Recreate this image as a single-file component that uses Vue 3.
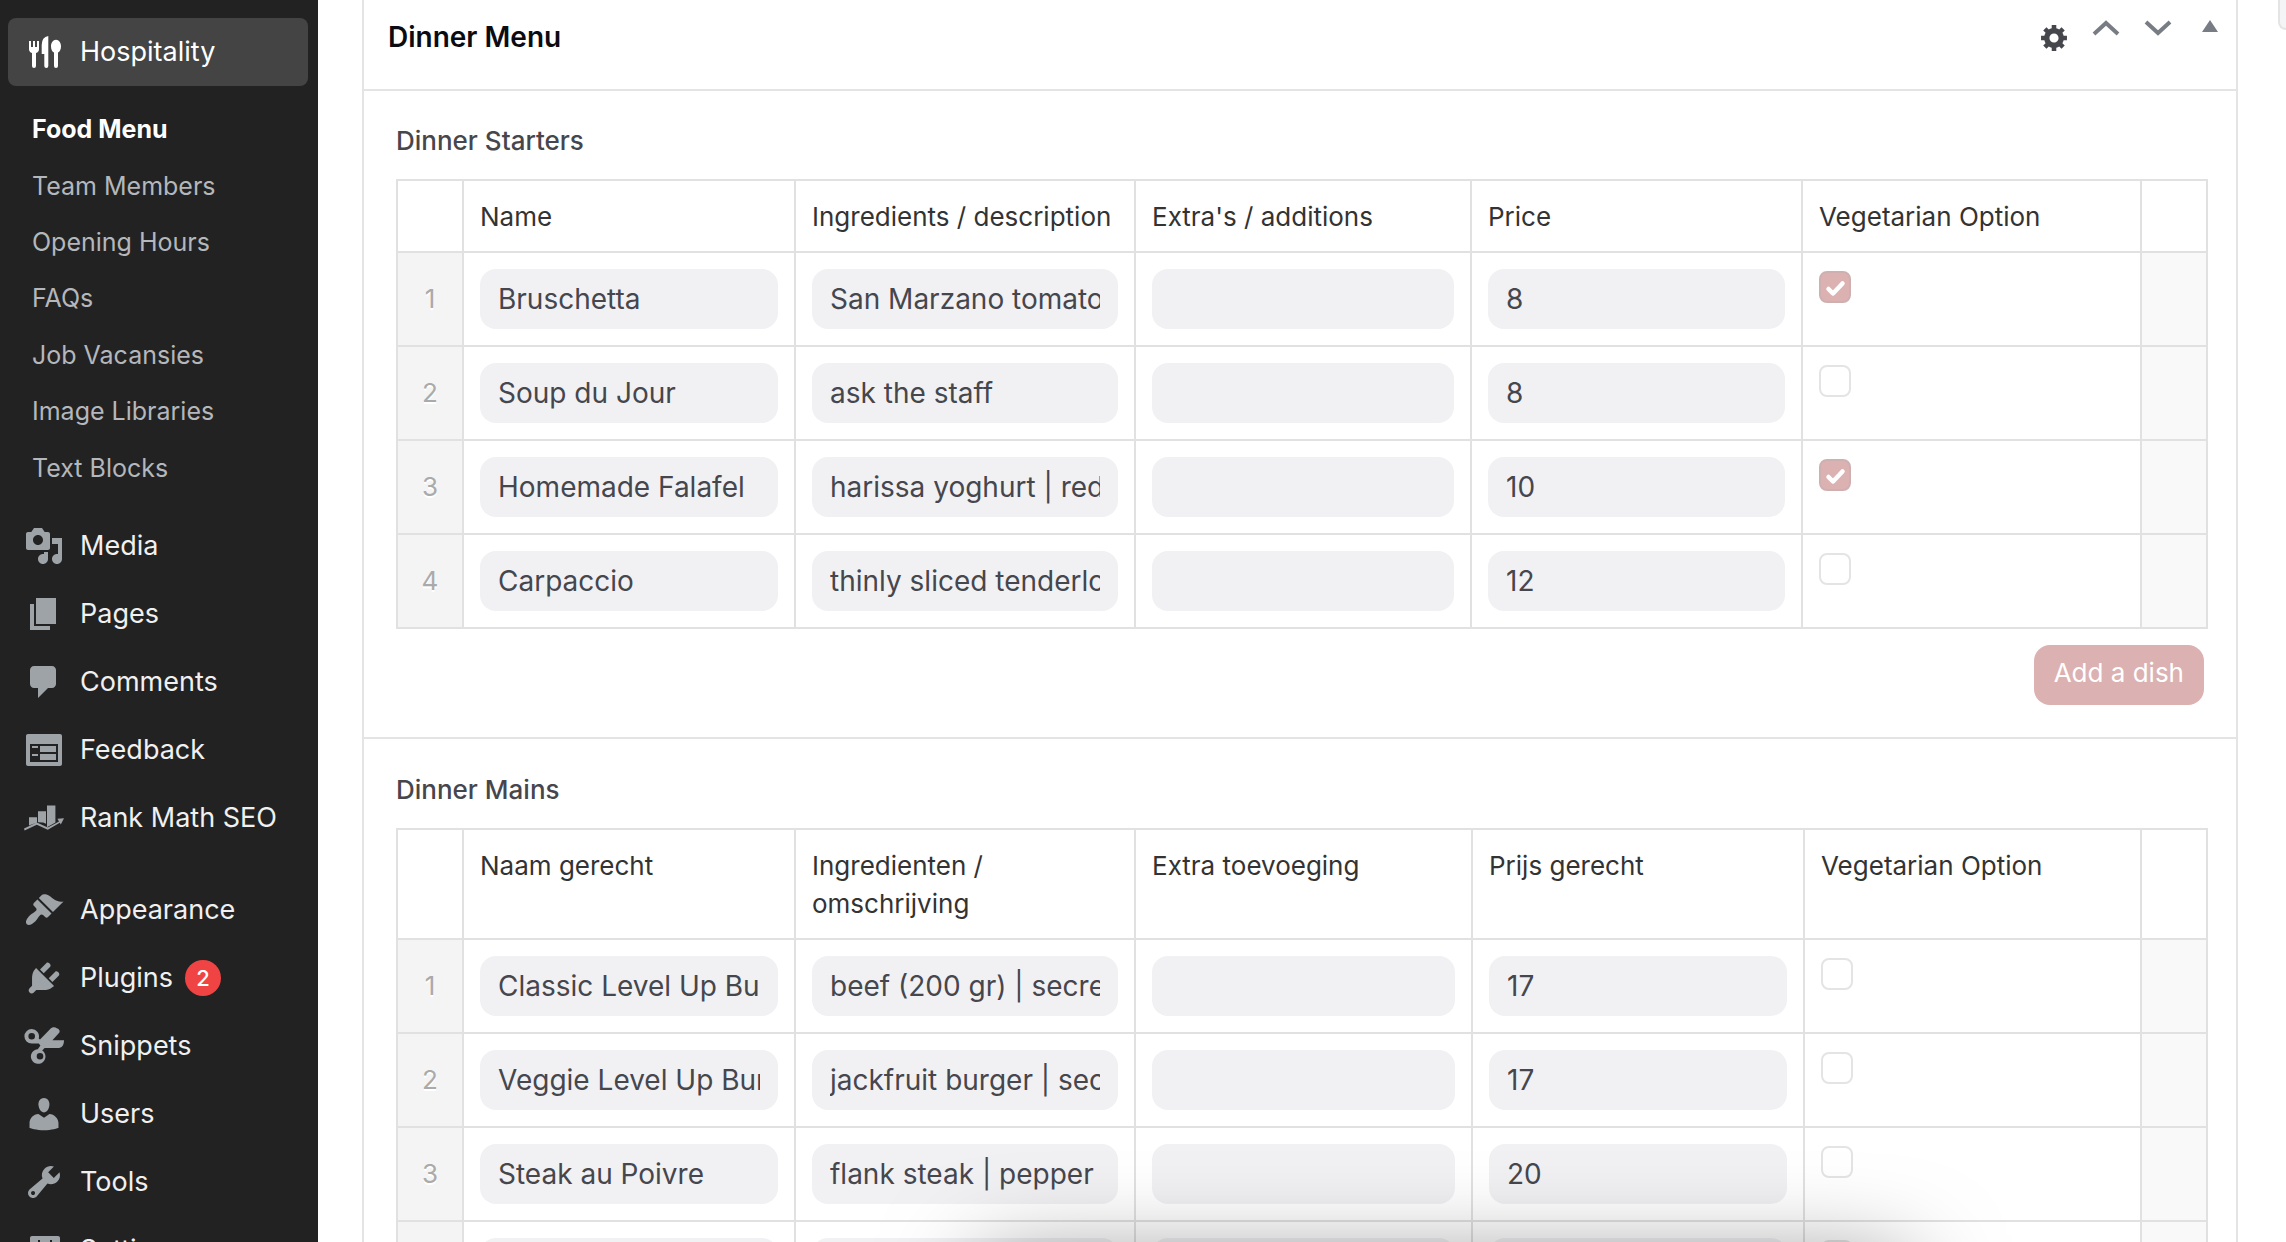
<script setup>
const submenu = ['Food Menu', 'Team Members', 'Opening Hours', 'FAQs', 'Job Vacansies', 'Image Libraries', 'Text Blocks']

const contentItems = [
  { label: 'Media', path: 'M13 11V4c0-.55-.45-1-1-1h-1.67L9 1H5L3.67 3H2c-.55 0-1 .45-1 1v7c0 .55.45 1 1 1h10c.55 0 1-.45 1-1zM7 4.5c1.38 0 2.5 1.12 2.5 2.5S8.38 9.5 7 9.5 4.5 8.38 4.5 7 5.62 4.5 7 4.5zM14 6h5v10.5c0 1.38-1.12 2.5-2.5 2.5S14 17.88 14 16.5s1.12-2.5 2.5-2.5c.17 0 .34.02.5.05V9h-3V6zm-4 8.05V13h2v3.5c0 1.38-1.12 2.5-2.5 2.5S7 17.88 7 16.5 8.12 14 9.5 14c.17 0 .34.02.5.05z' },
  { label: 'Pages', path: 'M6 15V2h10v13H6zm-1 1h8v2H3V5h2v11z' },
  { label: 'Comments', path: 'M5 2h9c1.1 0 2 .9 2 2v7c0 1.1-.9 2-2 2h-2l-5 5v-5H5c-1.1 0-2-.9-2-2V4c0-1.1.9-2 2-2z' },
  { label: 'Feedback', path: 'M2 2h16c.55 0 1 .45 1 1v14c0 .55-.45 1-1 1H2c-.55 0-1-.45-1-1V3c0-.55.45-1 1-1zm15 14V7H3v9h14zM4 8v1h3V8H4zm4 0v3h8V8H8zm-4 4v1h3v-1H4zm4 0v3h8v-3H8z' },
  { label: 'Rank Math SEO', path: 'M2.5 9.6h4v2.6l-4 1.5zM7 6.6h4v6.3l-1.4-.7L7 12.1zM11.5 3.7h4.2v8.6l-4.2 2.3zM0 15.3l6.4-3 5.5 2.5 5.6-3.1-.8-1.3L20 10.1l-1.6 3.1-.5-.8-6 3.5-5.5-2.500L.3 16.2z' },
]

const adminItems = [
  { label: 'Appearance', path: 'M14.48 11.06L7.41 3.99l1.5-1.5c.5-.56 2.3-.47 3.51.32 1.21.8 1.43 1.28 2.91 2.1 1.18.64 2.45 1.26 4.45.85zm-.71.71L6.7 4.7 4.93 6.47c-.39.39-.39 1.02 0 1.41l1.06 1.06c.39.39.39 1.03 0 1.42-.6.6-1.43 1.11-2.21 1.69-.35.26-.7.53-1.01.84C1.43 14.23.4 16.08 1.4 17.07c.99 1 2.84-.03 4.18-1.36.31-.31.58-.66.85-1.02.57-.78 1.08-1.61 1.69-2.21.39-.39 1.02-.39 1.41 0l1.06 1.06c.39.39 1.02.39 1.41 0z' },
  { label: 'Plugins', badge: 2, path: 'M13.11 4.36L9.87 7.6 8 5.73l3.24-3.24c.35-.34 1.05-.2 1.56.32.52.51.66 1.21.31 1.55zm-8 1.77l.91-1.12 9.01 9.01-1.19.84c-.71.71-2.63 1.16-3.82 1.16H6.14L4.9 17.26c-.59.59-1.54.59-2.12 0-.59-.58-.59-1.53 0-2.12l1.24-1.24v-3.88c0-1.13.4-3.19 1.09-3.89zm7.26 3.97l3.24-3.24c.34-.35 1.04-.21 1.55.31.52.51.66 1.21.31 1.55l-3.24 3.25z' },
  { label: 'Snippets', path: 'M3.85 1.5a3.65 3.65 0 0 1 3.5 4.7L8 6.8l5-5.200C14.2.3 15.6.6 16.4 1.1c1.4.5 1.7 1.5 1.2 2.3L14.2 7.1H20c0 2.5-1 3.9-3.2 3.9h-6.5L9.1 12.2a3.65 3.65 0 1 1-2.2-.6L8.2 9.7 7.4 8.8H3.85a3.65 3.65 0 0 1 0-7.3zm0 2a1.65 1.65 0 1 0 0 3.3 1.65 1.65 0 0 0 0-3.3zM8 13.5a1.65 1.65 0 1 0 0 3.3 1.65 1.65 0 0 0 0-3.3z' },
  { label: 'Users', path: 'M10 9.25c-2.27 0-2.73-3.44-2.73-3.44C7 4.02 7.82 2 9.97 2c2.16 0 2.98 2.02 2.71 3.81 0 0-.41 3.44-2.68 3.44zm0 2.57L12.72 10c2.39 0 4.52 2.33 4.52 4.53v2.49s-3.65 1.13-7.24 1.13c-3.65 0-7.24-1.13-7.24-1.13v-2.49c0-2.25 1.94-4.48 4.47-4.48z' },
  { label: 'Tools', path: 'M16.68 9.77c-1.34 1.34-3.3 1.67-4.95.99l-5.41 6.52c-.99.99-2.59.99-3.58 0s-.99-2.59 0-3.57l6.52-5.42c-.68-1.65-.35-3.61.99-4.95 1.28-1.28 3.12-1.62 4.72-1.06l-2.89 2.89 2.82 2.82 2.86-2.87c.53 1.58.18 3.39-1.08 4.65zM3.81 16.21c.4.39 1.04.39 1.43 0 .4-.4.4-1.04 0-1.43-.39-.4-1.03-.4-1.43 0-.39.39-.39 1.03 0 1.43z' },
  { label: 'Settings', path: 'M18 16V4c0-.55-.45-1-1-1H4c-.55 0-1 .45-1 1v12c0 .55.45 1 1 1h13c.55 0 1-.45 1-1zM8 5v7H7V5zm6 0v3h-1V5zm0 5v5h-1v-5z' },
]

const sections = [
  {
    id: 'starters',
    title: 'Dinner Starters',
    columns: ['Name', 'Ingredients / description', "Extra's / additions", 'Price', 'Vegetarian Option'],
    widths: [332, 340, 336, 331],
    action: 'Add a dish',
    rows: [
      { values: ['Bruschetta', 'San Marzano tomatoes | basil', '', '8'], veg: true },
      { values: ['Soup du Jour', 'ask the staff', '', '8'], veg: false },
      { values: ['Homemade Falafel', 'harissa yoghurt | red onion', '', '10'], veg: true },
      { values: ['Carpaccio', 'thinly sliced tenderloin', '', '12'], veg: false },
    ],
  },
  {
    id: 'mains',
    title: 'Dinner Mains',
    columns: ['Naam gerecht', 'Ingredienten / omschrijving', 'Extra toevoeging', 'Prijs gerecht', 'Vegetarian Option'],
    widths: [332, 340, 337, 332],
    rows: [
      { values: ['Classic Level Up Burger', 'beef (200 gr) | secret sauce', '', '17'], veg: false },
      { values: ['Veggie Level Up Burger', 'jackfruit burger | secret sauce', '', '17'], veg: false },
      { values: ['Steak au Poivre', 'flank steak | pepper', '', '20'], veg: false },
      { values: ['', '', '', ''], veg: false },
    ],
  },
]
</script>

<template>
  <div class="admin">
    <nav class="sidebar">
      <a href="#" class="item current">
        <svg class="icon" viewBox="0 0 40 40" aria-hidden="true">
          <path d="M5 9h2v6h2V9h2v6h2V9h2v8q0 3-3 4v13q0 2-2 2t-2-2V21q-3-1-3-4zM24.300 4v30q0 2-2 2t-2-2V22h-2.600V13q0-8 6.600-9z" />
          <path d="M32 7.700c3 0 5 3 5 6.500 0 3-1.200 5.500-3 6.400V34q0 2-2 2t-2-2V20.600c-1.800-.9-3-3.400-3-6.400 0-3.500 2-6.500 5-6.500z" />
        </svg>
        <span>Hospitality</span>
      </a>
      <div class="submenu">
        <a v-for="(label, i) in submenu" :key="label" href="#" class="subitem" :class="{ selected: i === 0 }">{{ label }}</a>
      </div>
      <div v-for="(group, g) in [contentItems, adminItems]" :key="g" class="group">
        <a v-for="item in group" :key="item.label" href="#" class="item">
          <svg class="icon" viewBox="0 0 20 20" aria-hidden="true"><path fill-rule="evenodd" :d="item.path" /></svg>
          <span>{{ item.label }}</span>
          <span v-if="item.badge" class="badge">{{ item.badge }}</span>
        </a>
      </div>
    </nav>

    <main class="content">
      <div class="panel">
        <header class="panel-head">
          <h2>Dinner Menu</h2>
          <div class="handles">
            <button type="button" class="gear" aria-label="Settings">
              <svg width="32" height="32" viewBox="0 0 19 21" aria-hidden="true">
                <path d="M18 12h-2.180c-.17.7-.44 1.350-.81 1.930l1.540 1.540-2.100 2.100-1.540-1.540c-.58.36-1.230.63-1.910.79V19H8v-2.180c-.68-.16-1.330-.43-1.910-.79l-1.540 1.540-2.120-2.120 1.540-1.540c-.36-.58-.63-1.230-.79-1.910H1V9.030h2.170c.16-.7.44-1.350.8-1.940L2.430 5.550l2.100-2.100 1.540 1.540c.58-.37 1.240-.64 1.930-.81V2h3v2.180c.68.16 1.330.43 1.910.79l1.540-1.540 2.120 2.120-1.540 1.540c.36.59.64 1.240.8 1.940H18V12zm-8.500 1.500c1.660 0 3-1.340 3-3s-1.340-3-3-3-3 1.340-3 3 1.340 3 3 3z" />
              </svg>
            </button>
            <button type="button" aria-label="Move up">
              <svg width="28" height="16" viewBox="0 0 28 16" aria-hidden="true"><path d="M2 14L14 3l12 11" class="stroke" /></svg>
            </button>
            <button type="button" aria-label="Move down">
              <svg width="28" height="16" viewBox="0 0 28 16" aria-hidden="true"><path d="M2 2l12 11L26 2" class="stroke" /></svg>
            </button>
            <button type="button" aria-label="Toggle panel">
              <svg width="16" height="16" viewBox="0 0 16 16" aria-hidden="true"><path d="M8 0l8 12H0z" /></svg>
            </button>
          </div>
        </header>

        <section v-for="section in sections" :key="section.id" class="field">
          <h3 :id="section.id">{{ section.title }}</h3>
          <table :aria-labelledby="section.id">
            <colgroup>
              <col class="col-edge" />
              <col v-for="(w, i) in section.widths" :key="i" :style="{ width: w + 'px' }" />
              <col />
              <col class="col-edge" />
            </colgroup>
            <thead>
              <tr>
                <th></th>
                <th v-for="column in section.columns" :key="column" scope="col">{{ column }}</th>
                <th></th>
              </tr>
            </thead>
            <tbody>
              <tr v-for="(row, r) in section.rows" :key="r">
                <td class="order">{{ r + 1 }}</td>
                <td v-for="(value, c) in row.values" :key="c">
                  <input v-model="row.values[c]" type="text" class="text" :aria-label="section.columns[c]" />
                </td>
                <td><input v-model="row.veg" type="checkbox" class="check" aria-label="Vegetarian Option" /></td>
                <td class="remove"></td>
              </tr>
            </tbody>
          </table>
          <div v-if="section.action" class="actions">
            <button type="button" class="add">{{ section.action }}</button>
          </div>
        </section>
      </div>
    </main>

    <aside class="side"><div class="side-box"></div></aside>
    <div class="dock-shadow"></div>
  </div>
</template>

<style>
body {
  background: #fff;
}
</style>

<style scoped>
* {
  box-sizing: border-box;
}
.admin {
  display: flex;
  height: 100vh;
  overflow: hidden;
  position: relative;
  font-family: Inter, "Liberation Sans", sans-serif;
  font-size: 26px;
  line-height: 38px;
}
a {
  text-decoration: none;
}
.sidebar {
  flex: 0 0 318px;
  padding-top: 18px;
  background: #222;
}
.item {
  display: flex;
  align-items: center;
  gap: 16px;
  height: 68px;
  margin: 0 10px 0 8px;
  padding-left: 16px;
  color: #f0f0f1;
  font-size: 27px;
  white-space: nowrap;
}
.item.current {
  border-radius: 8px;
  background: #444;
  color: #fff;
}
.icon {
  flex: none;
  width: 40px;
  height: 40px;
  fill: #9ea3a8;
}
.current .icon {
  fill: #fff;
}
.submenu {
  display: flex;
  flex-direction: column;
  height: 395px;
  margin-top: 15px;
}
.subitem {
  display: flex;
  flex: 1;
  align-items: center;
  padding-left: 32px;
  color: #b4b7bc;
  font-size: 25px;
}
.subitem.selected {
  color: #fff;
  font-weight: 700;
}
.group {
  margin-top: 16px;
}
.group + .group {
  margin-top: 24px;
}
.badge {
  width: 36px;
  height: 36px;
  margin-left: -4px;
  border-radius: 18px;
  background: #f04444;
  color: #fff;
  font-size: 22px;
  font-weight: 500;
  line-height: 36px;
  text-align: center;
}
.content {
  flex: 1;
  min-width: 0;
  padding: 0 40px 0 44px;
}
.panel {
  border: solid #e4e4e5;
  border-width: 0 2px;
}
.panel-head {
  display: flex;
  justify-content: space-between;
  align-items: flex-start;
  padding: 18px 0 33px 24px;
  border-bottom: 2px solid #e4e4e5;
}
h2,
h3 {
  margin: 0;
}
h2 {
  color: #0b0b12;
  font-size: 28px;
  font-weight: 600;
}
.handles {
  display: flex;
  height: 38px;
}
.handles button {
  display: flex;
  align-items: center;
  justify-content: center;
  width: 52px;
  height: 20px;
  padding: 0;
  border: 0;
  background: none;
  fill: #787c84;
}
.handles .gear {
  height: 40px;
  fill: #46464d;
}
.stroke {
  fill: none;
  stroke: #787c84;
  stroke-width: 4;
}
.field {
  padding: 31px 28px 32px 32px;
  border-bottom: 2px solid #e4e4e5;
}
.field + .field {
  padding-top: 32px;
}
h3 {
  margin-bottom: 19px;
  color: #46464d;
  font-size: 26px;
  font-weight: 500;
}
table {
  width: 100%;
  table-layout: fixed;
  border-collapse: separate;
  border-spacing: 0;
  border: solid #e1e1e1;
  border-width: 0 2px 2px 0;
}
.col-edge {
  width: 66px;
}
th,
td {
  padding: 16px;
  border: solid #e1e1e1;
  border-width: 2px 0 0 2px;
  vertical-align: top;
}
th {
  padding: 17px 16px 15px;
  color: #333;
  font-weight: 400;
  text-align: left;
}
td.order {
  padding: 0;
  background: #f4f4f4;
  color: #aaa;
  text-align: center;
  text-shadow: 0 2px 0 #fff;
  vertical-align: middle;
}
td.remove {
  background: #f9f9f9;
}
.text {
  display: block;
  width: 100%;
  height: 60px;
  padding: 0 18px;
  border: 0;
  border-radius: 16px;
  background: #f1f1f4;
  color: #46464d;
  font: inherit;
  font-size: 28px;
}
.check {
  appearance: none;
  display: block;
  width: 32px;
  height: 32px;
  margin: 2px 0 0;
  border: 2px solid #e4e4e5;
  border-radius: 8px;
  background: #fff;
}
.check:checked {
  border-color: #cfb0b0;
  background: #dcb1b1 url("data:image/svg+xml,%3Csvg xmlns='http://www.w3.org/2000/svg' viewBox='0 0 28 28'%3E%3Cpath d='M7.500 16l4.500 4.500L21.500 10.500' fill='none' stroke='white' stroke-width='4.500' stroke-linecap='round' stroke-linejoin='round'/%3E%3C/svg%3E") center / 28px 28px no-repeat;
}
.actions {
  display: flex;
  justify-content: flex-end;
  padding: 16px 4px 0 0;
}
.add {
  height: 60px;
  padding: 0 20px 4px;
  border: 0;
  border-radius: 16px;
  background: #dcb1b1;
  color: #fff;
  font: inherit;
}
.side {
  flex: 0 0 8px;
  overflow: hidden;
}
.side-box {
  width: 40px;
  height: 30px;
  border: solid #e4e4e5;
  border-width: 0 0 2px 2px;
  border-radius: 0 0 0 8px;
  background: #f4f4f6;
}
.dock-shadow {
  position: absolute;
  top: calc(100% + 24px);
  left: 980px;
  right: 380px;
  height: 80px;
  box-shadow: 0 0 96px rgba(0, 0, 0, 0.5);
  pointer-events: none;
}
</style>
